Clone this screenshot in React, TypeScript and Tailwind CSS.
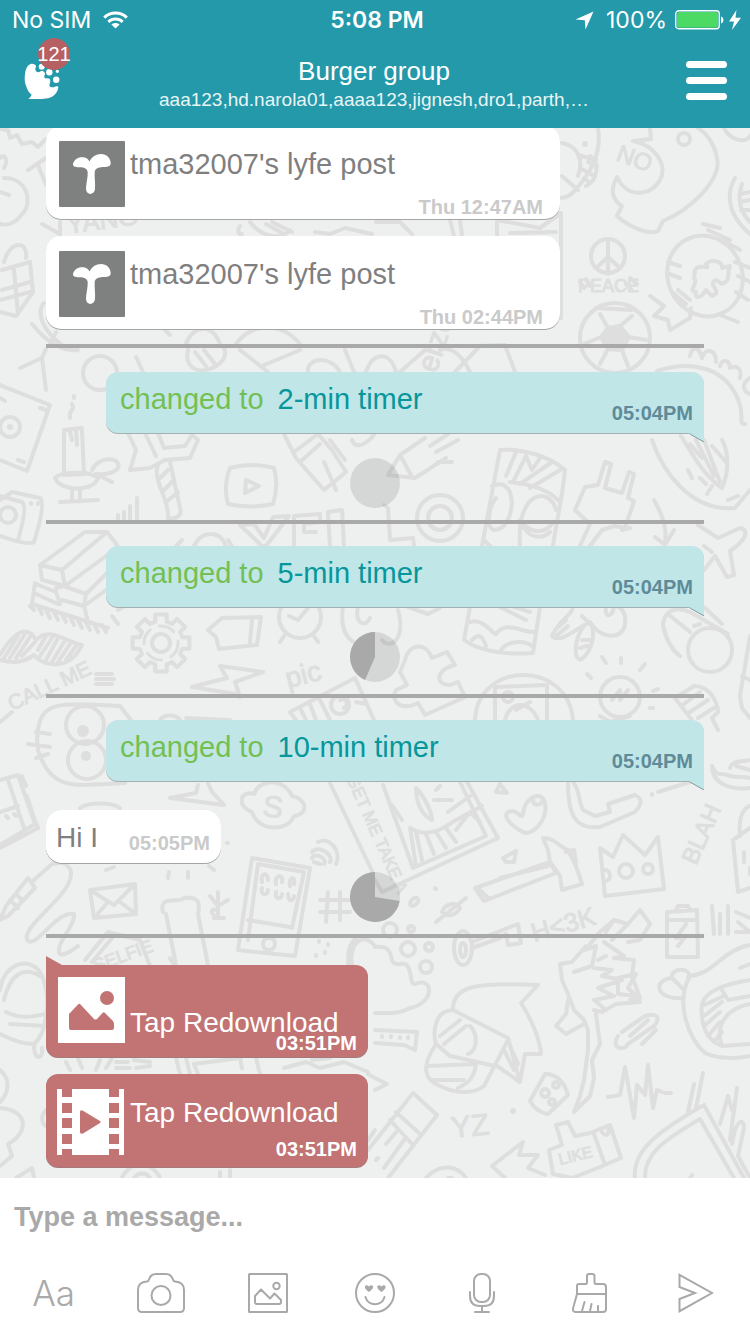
import React from "react";

const OUTLINES: string[] = [
  // top left: comb, pouch, tee, gift
  "M0 129L8 130L10 138L17 135L22 144L32 142L38 147L46 139",
  "M0 158C6 152 8 162 4 168M4 178C30 178 32 206 22 214C14 226 4 225 0 224M0 192L9 195",
  "M28 170L46 158M38 165L46 185M42 224L60 234M60 222V236",
  "M2 270L30 262L33 292L16 316L0 312M4 262C10 240 28 240 26 258M2 290L30 282M14 270L18 314M0 300L30 292",
  "M44 303C36 312 42 330 62 345M32 324C45 340 60 352 78 350M50 344L56 332M165 330L170 335M186 344C192 326 212 322 220 344M236 344C250 324 280 320 300 344",
  "M240 226C236 232 240 236 242 234M250 222C262 238 282 240 290 230M266 224L284 234M272 222L292 232M315 232L330 234L345 228L372 234M376 222L400 222L412 234M450 220L454 236M460 220L462 236M497 220L540 228L561 213V318M497 220V236M510 233L556 232",
  // ball, dragon, eye
  "M598 128C602 152 592 172 575 190C570 197 562 199 558 197M562 143C578 146 584 160 578 176M590 156C600 162 598 180 586 186M578 155L596 160M580 168L594 176M562 176L578 190M588 162L597 166M584 178L590 183",
  "M650 128L651 139L633 141C655 145 668 165 660 180C652 195 628 200 617 177C610 190 612 200 622 206L617 216C630 228 650 235 658 231L663 221C690 210 722 180 717 158C714 142 705 132 698 128",
  "M724 128C730 140 745 144 750 136M735 178C728 190 724 212 750 234M742 184C738 196 738 210 750 222M741 194L750 192M740 202L750 200M741 210L750 210",
  // peace sign
  "M608 239V274M608 257L596 268M608 257L620 268M580 282L584 288M586 279L590 286M626 284L631 289M630 278L637 284",
  // coin head, fish tail, rays
  "M703 224L720 228M708 230L730 240M722 240L740 250M735 262L750 268M738 276L750 282M736 292L748 300M720 315L738 322M668 262L680 266M669 274L680 278",
  "M695 270C700 262 712 272 706 264C712 258 724 262 722 268L730 266C726 276 732 280 722 284L716 280C706 284 724 292 712 296L706 290C700 300 694 298 696 292C686 290 700 284 694 278Z",
  "M650 296L664 306L654 316L668 320L670 330L690 318L691 308M672 292L686 304M678 290L690 300",
  // football
  "M608 328L620 326L629 337L622 350L608 349L601 337ZM608 328L600 314M620 326L632 316M629 337L646 340M622 350L628 366M608 349L600 364M601 337L584 344M596 308L632 310",
  // right speech and cone
  "M690 356C692 344 700 348 702 358C706 346 716 350 716 362M720 366C722 358 730 360 730 368C738 364 742 370 740 378M750 378C740 384 744 392 750 394",
  "M657 371C690 360 728 366 740 405C744 420 738 424 745 424M652 440C662 470 690 512 735 508L750 490M681 436C694 456 702 474 722 488C730 470 728 450 722 440M690 444L702 458M696 440L714 476M704 440L720 482M712 446L726 462M688 470L692 478M700 478L706 484M707 494L712 486M728 500L738 496",
  // left column middle
  "M20 368L42 358L46 390M42 358L46 349M136 357L143 372",
  "M188 350C184 366 196 372 206 370C222 366 228 356 224 348M195 352L206 366M204 350L215 364",
  "M240 350L268 372M262 366L300 350M308 372C306 358 330 354 340 372M345 350L354 372M366 372C372 352 390 350 396 372M400 372L425 350M440 350C452 346 462 356 470 372M455 372L480 346L505 345L515 372",
  "M0 385L50 405L27 471L0 460M40 408L46 410M18 460L24 462M0 398L5 401",
  "M64 430V475M82 430L84 474M64 430L82 428M70 432L72 440M76 430L77 445M70 418C68 408 76 412 72 404M74 396V398M64 475L84 474M55 478C60 492 94 492 98 478C90 470 60 472 55 478M92 470C100 454 122 458 118 468C112 476 96 474 96 474L112 482M72 488V500M80 488V500M60 502L98 500",
  "M128 433L136 450L130 470L150 468L165 460L190 458L198 440L190 433M145 433L156 456M158 433L164 448L185 446L190 438M158 465C152 480 170 500 168 518C178 520 182 514 180 508L170 462M160 478L168 470M164 490L174 480M166 502L178 492",
  "M230 468Q252 462 274 468Q279 486 273 504Q250 509 228 504Q223 486 230 468ZM246 480L259 486L245 493Z",
  "M284 434L296 458L324 490L346 472L332 450L318 434M294 452L318 434M300 462L320 444M324 462L336 490M330 440L345 460",
  "M352 440C356 452 372 440 374 434M388 475L400 455L425 438M388 475L415 478L446 458M400 455L412 477M430 446L448 434M436 452L458 440M438 462L452 462",
  "M0 500L12 492L40 498Q46 504 34 542Q28 546 0 536M0 496L22 502Q28 506 18 540M31 503V504M38 503V504",
  "M118 515V520M124 512V520M130 506V520M137 498V520",
  // brick pile
  "M40 565L85 532L107 532L117 545M40 565L62 570L107 532M40 565L42 580L65 586L106 556M62 570L65 586M35 583L32 604L108 628M36 584L56 592L60 604M36 594L58 604M56 588L64 586L86 594L106 574M62 600L84 606L86 594M84 606L106 590M84 606L88 622M30 606L34 610M38 606L42 614M46 610L50 618M54 612L58 620M62 614L66 622M70 617L74 625M78 620L82 628M86 622L90 630M94 624L98 632M102 625L106 632M112 616L118 624M118 610L128 604",
  // vello letters
  "M240 525L262 546L266 546L289 516L273 517L264 538L254 524ZM294 516L320 514V522L304 524V532H316M294 516V546M328 512L342 510L344 546M328 512L330 546M384 505L388 508L390 540L413 538L414 546",
  "M176 546L182 540M194 546C202 530 220 530 226 546M228 540L232 546",
  // patterned jug
  "M500 450C520 448 550 456 565 470C562 500 556 524 553 546M500 450L482 546M506 476L516 452M514 480L526 456L532 470L540 458M520 484L552 462M530 488L560 470M492 486C520 474 516 530 494 530C486 528 488 508 496 498M510 482C530 484 548 490 558 500M520 546C516 490 550 486 556 510M520 520C530 534 544 534 552 524M524 528C532 540 544 538 550 532M484 540L490 546",
  // plug, arrow, plane
  "M575 510L585 487L598 485L605 462L611 464L605 488L622 493L629 472L634 474L628 498L634 501L625 528L615 526L602 530L590 546M575 510L590 524L580 546M622 530L630 528M654 500C664 518 667 530 665 543M655 537L665 545L674 530",
  "M698 525L718 538L740 528C750 530 746 540 730 551L734 575L727 577L715 556L704 570M704 546L712 552",
  // row at 610-660
  "M208 630L222 618L261 617L257 645L219 649L216 637ZM252 619L250 642",
  "M289 616L298 620L308 608M284 636L280 642M314 636L318 642",
  "M0 655C15 630 27 625 36 640C50 626 66 642 82 645C70 670 45 668 34 655C20 665 8 662 0 660M4 658L18 636M10 658L25 634M16 658L32 634M22 656L35 642M38 650L46 636M40 656L52 638M46 660L58 638M52 662L64 642M58 662L70 644M66 660L76 646",
  "M343 607C338 640 360 650 366 640M358 607C354 624 366 628 370 618M398 610C406 640 390 650 382 640M408 607L428 614L440 608",
  "M470 607L464 640C480 652 510 655 533 653L540 607M470 622C484 618 492 634 496 634C506 620 520 632 534 632M472 640C482 630 484 642 486 646M500 652C506 640 524 640 532 646M500 607L526 620M514 607L530 612",
  "M573 607C572 616 560 618 552 636C560 644 574 630 590 622C600 638 618 640 624 628C628 616 622 608 618 607M582 616L592 626C596 640 588 656 580 660C572 656 576 636 584 626M555 630L566 620M556 636L568 626M582 640L590 640M580 648L587 646M606 607C604 618 612 618 614 607",
  "M663 625C664 610 676 606 690 612L728 634M668 614L690 632M704 607L722 624M663 625C666 640 672 650 680 656M694 626L700 624",
  "M750 636L740 696L742 708L750 718M742 676L750 680",
  // lightning, owl, wallet
  "M220 666L263 672L235 682L240 697M220 666L227 678L192 687L236 694",
  "M96 674L112 674M96 679L114 679M96 684L112 684M0 722L12 712",
  "M38 730C42 700 62 703 120 706L134 724M38 750C46 776 60 786 85 785L125 783M36 732L50 734M28 744L50 747M36 758L48 754M38 730C36 740 38 744 38 750",
  "M160 720C164 714 176 714 180 720M186 718L230 720M198 785L196 793L170 798L224 805L212 792L208 783M80 808C88 802 112 802 120 808",
  "M290 712L355 678L374 720M290 712L296 720M300 708L306 720M310 704L316 720M320 700L330 720M340 700C346 696 350 706 344 708M356 702L366 704",
  "M405 660C408 645 425 640 432 658L447 652L455 665C435 670 435 685 450 685L458 682L465 697L425 715L418 703C400 712 390 700 396 690L407 685L400 672Z",
  "M475 720C478 660 568 660 573 720M495 687L547 685V720M495 687V720M505 720C510 700 530 700 538 720M516 710L530 702",
  "M602 657L606 663M621 658V663M645 664L640 670M587 674L591 678M653 691L658 689M650 708H653M612 700L620 690L620 700L628 690M600 716L610 722L630 716",
  "M675 698L694 686C712 686 718 706 718 712L712 718L718 730M675 698L692 720M684 704L700 692M690 712L708 700M698 718L714 708",
  // newspaper, cloud, poster
  "M0 780L18 775L35 824L0 845M8 780L24 828M0 812L18 806M6 816L8 818M14 814L16 816M22 776L26 786M27 796L34 818L38 828L0 848",
  "M254 794C240 790 236 806 252 812C258 832 288 832 294 816C310 814 306 798 292 796C284 778 260 778 254 794Z",
  "M330 783L373 873M382 892L498 838L466 780M383 785L413 868L486 836L460 782M410 828L416 866M410 828C430 840 446 826 456 820L482 806M416 832L422 860M426 834L434 854M436 832L446 848M446 828L456 842M416 788C424 796 432 812 432 820C420 814 416 800 416 788ZM434 800L452 800M436 790L440 786M448 812L470 796M456 830L470 812L480 822M392 805L402 820M382 892L375 880",
  "M496 792L500 784L507 793ZM525 833C508 825 500 812 512 811C518 811 522 820 523 814C525 796 540 792 544 800C550 815 536 834 525 833ZM533 798C532 806 540 806 542 802",
  "M568 782C568 815 575 830 600 827L635 812Q646 800 635 795L608 804L610 812L595 816L583 810C578 800 580 790 573 782M658 792L690 782M652 794V795",
  "M600 848L613 857L623 835L645 855L658 837L664 889L605 896ZM603 870C612 868 612 882 605 881",
  "M475 888L550 862L556 873L484 901ZM480 890L488 898M500 878L548 866M543 838C556 838 560 848 568 850L576 866L582 884L562 890L560 876L550 862L548 850ZM566 852L574 850L576 862M503 858L516 851L514 862L506 862Z",
  "M435 888L436 889M410 904C412 896 420 896 418 902C414 908 410 906 410 904M436 922L466 898M442 912C446 902 458 902 460 908C454 918 446 916 442 912",
  "M472 942L518 924L521 943L508 945L506 934L500 938M472 948L500 938",
  "M667 912L697 910L698 957L667 957ZM667 920H697M676 910L678 906H688L690 910M686 924L676 938L686 936L678 946M712 906L714 934M728 906V934M720 914V934M736 912L750 918M738 922L750 932M736 932H750",
  "M712 766C712 786 735 790 750 788M712 766C716 778 724 772 730 776C738 778 742 776 750 778M730 768C732 760 742 762 750 760M736 766L750 770M733 840L750 828M733 840L738 892L750 888M740 836C738 816 744 808 750 806M744 852V862M750 868V874",
  "M106 870L114 867M169 872L168 878M188 872V878M209 866L214 870M227 843H228",
  "M0 920L6 906L28 878L35 888L8 916L0 920M10 900L18 908M16 894L22 900M34 880L52 864C70 860 80 872 60 896C42 916 24 930 27 940C36 950 56 910 74 914C76 926 54 944 60 954C66 956 72 950 78 946",
  "M90 890L135 884L136 914L94 918ZM90 890L114 905L135 884M94 918L108 902M136 914L120 902",
  "M163 912C158 894 180 904 184 898C200 896 200 904 198 914L208 965M166 914L176 965M218 892V915M210 896L218 906L228 900M214 915C210 912 212 908 216 910M214 918H224",
  "M252 858L310 868L295 956L238 950ZM258 864L304 872L292 928M258 864L248 940M248 920L290 927M262 882C260 872 268 872 268 880M276 884C274 874 284 874 282 882M290 886C288 876 296 876 294 884M262 888C260 896 268 896 268 890M276 892C274 900 282 900 282 894M288 894C288 902 294 902 294 896",
  "M312 858C314 852 328 858 324 864M312 852C320 844 334 856 330 862M318 842C330 836 342 852 336 864M314 862L320 864M328 892L326 922M340 892V920M320 900H350M320 912H350",
  // blob with dots, mask
  "M352 965C348 945 362 930 375 946M375 947C400 945 384 966 400 964C414 960 408 985 415 984C435 976 434 1004 410 1008C400 1014 390 1013 375 1013",
  "M453 1010C452 985 480 982 538 985L521 1003C532 1020 540 1040 541 1054L525 1054L520 1082L497 1066M453 1010L508 1038L520 1082M453 1010C436 1010 432 1030 436 1044L450 1056M436 1044C420 1068 425 1080 440 1086C456 1094 474 1094 484 1086L508 1040M450 1056L495 1066M428 1066L476 1064C474 1080 466 1084 458 1088M432 1080L464 1080M470 1026C478 1034 478 1050 468 1054M440 1036L460 1020M444 1044L466 1026M504 1050L514 1070M510 1046L518 1064",
  "M375 1030L417 1032L415 1050L404 1045L375 1043M382 1036V1037M391 1036V1037M400 1037V1038M408 1037V1038M375 1078L387 1084L375 1090",
  // tangled map
  "M600 932L614 920L628 924L640 910L650 924L640 940L628 942M614 920L606 932M628 924L612 940M600 932L590 944M586 946L572 962L560 964L562 980L568 994L574 1010L584 1020L588 1030L588 1050L584 1080L580 1096L574 1112M584 950L596 946L592 966L574 972M604 942L624 956L614 958L634 960L632 976L640 998L630 1000M594 968L612 970L602 976L622 980L598 988L614 996L594 1000L606 1010M618 978L636 974L628 988L636 996L618 994ZM594 1010L602 1012L616 1004L640 1002M568 1000L566 1014L556 1026L566 1034L584 1024M596 1014L600 1044L592 1060L594 1078L590 1096L576 1110M606 956L598 960",
  "M618 1036C610 1048 624 1052 628 1044L654 1026C664 1014 650 1012 642 1018L622 1032M630 1036L648 1020M642 1044L656 1030",
  "M750 945C722 950 714 974 690 976C674 1004 690 1040 705 1053C720 1060 740 1058 750 1056M750 980C726 984 706 990 702 1004C700 1024 706 1040 722 1046L750 1044M722 990L728 1000L750 996M722 1046C714 1024 728 1008 750 1004M702 1006L724 996M704 1016L722 1002M704 1026L720 1012M708 1036L720 1022M714 1042L722 1032M688 978C694 968 670 966 672 978C652 980 656 1000 682 998M672 978L682 988M740 968L750 964",
  "M608 1097L620 1095L625 1067L634 1118L637 1085L645 1095L648 1065L653 1108L657 1090L662 1092M665 1093H671",
  "M545 1074Q562 1074 568 1095L548 1114Q536 1112 530 1101Z",
  "M549 1150L562 1145L556 1125L568 1122L575 1136L590 1133L610 1125L621 1158L600 1167L572 1178L553 1174ZM594 1134L604 1162M602 1132C606 1138 610 1134 608 1128",
  "M368 1150L413 1093L437 1115L388 1178M390 1120L412 1144M396 1112L420 1134M386 1144L398 1130M384 1168L404 1140M376 1160L378 1158",
  "M505 1178L492 1166L523 1142L519 1155L538 1155L528 1168L545 1175M426 1178C440 1162 458 1166 466 1178M448 1178H452",
  "M635 1178C632 1150 660 1130 704 1105L744 1178M645 1178C644 1154 664 1140 700 1119L734 1178M688 1112L694 1084M696 1108L703 1073M720 1124L728 1096L732 1110M730 1140L737 1088M732 1144C736 1118 744 1118 744 1128L738 1156L750 1178M690 1178L692 1175",
  // bottom left
  "M0 990C4 960 34 956 42 976C52 1000 46 1034 34 1044C22 1044 8 1038 0 1034M4 1000C10 974 24 966 40 976M6 1012C22 1020 34 1016 46 1014M10 1024L46 1026M34 1046C34 1062 44 1058 42 1048M0 1070C12 1080 8 1094 0 1102M0 1108C30 1110 28 1134 8 1144L12 1156L0 1166M16 1178L32 1168L34 1178",
  "M85 960L108 932L140 940L150 966M92 962L112 938M174 965L170 958M66 1062L70 1070M78 1058L82 1068M96 1070L100 1060M106 1068L112 1058M116 1062H128M116 1068H130M134 1060L150 1062M136 1068L150 1066M176 1058L180 1074M186 1058L190 1074M198 1074L194 1064L240 1058L242 1068M256 1058L260 1074M284 1068L306 1062L320 1068L344 1062L368 1072M312 1060L330 1058",
  "M122 1178C130 1160 152 1160 160 1178M134 1178C138 1172 146 1172 150 1178M220 1172V1178M230 1170V1178M46 1110C40 1116 42 1124 46 1126M368 1074L375 1078M368 1140L375 1130",
  "M319 941V942M325 952V953M316 955V956M328 944V945M356 938C344 950 350 962 348 970",
];

const CIRCLES: number[][] = [
  [684, 139, 6], [608, 256, 17], [615, 338, 35], [100, 373, 17], [10, 427, 10], [8, 515, 8],
  [440, 518, 23], [440, 518, 12], [161, 643, 9], [300, 617, 21], [85, 725, 19], [87, 760, 19],
  [620, 697, 20], [710, 650, 22], [508, 697, 5], [626, 871, 7], [648, 869, 5], [269, 944, 6],
  [390, 930, 7], [408, 949, 7], [429, 947, 4], [426, 967, 6], [411, 929, 3], [545, 1093, 4],
  [556, 1085, 3], [552, 1102, 3], [340, 705, 9],
];

const WORDS: { t: string; x: number; y: number; r: number; s: number }[] = [
  { t: "NO", x: 615, y: 160, r: 20, s: 24 },
  { t: "YANG", x: 68, y: 234, r: -8, s: 26 },
  { t: "PEACE", x: 578, y: 292, r: 0, s: 18 },
  { t: "erzo", x: 436, y: 374, r: -72, s: 30 },
  { t: "CALL ME", x: 12, y: 711, r: -25, s: 21 },
  { t: "pic", x: 288, y: 688, r: -14, s: 28 },
  { t: "S", x: 262, y: 816, r: 6, s: 30 },
  { t: "GET ME TAKE A", x: 346, y: 778, r: 66, s: 17 },
  { t: "BLAH", x: 696, y: 866, r: -66, s: 24 },
  { t: "H<3K", x: 534, y: 942, r: -16, s: 26 },
  { t: "YZ", x: 452, y: 1138, r: -6, s: 30 },
  { t: "LIKE", x: 560, y: 1165, r: -14, s: 16 },
  { t: "SELFIE", x: 96, y: 972, r: -20, s: 18 },
];

function gearPath(cx: number, cy: number) {
  const pts: string[] = [];
  for (let i = 0; i < 8; i++) {
    const a = (i * Math.PI) / 4;
    for (const [d, r] of [[-0.26, 22], [-0.2, 29], [0.2, 29], [0.26, 22]]) {
      pts.push(`${(cx + r * Math.cos(a + d)).toFixed(1)} ${(cy + r * Math.sin(a + d)).toFixed(1)}`);
    }
  }
  return `M${pts.join("L")}Z`;
}

function Wallpaper() {
  return (
    <svg
      aria-hidden="true"
      className="absolute inset-0 h-full w-full"
      viewBox="0 128 750 1050"
      preserveAspectRatio="xMidYMin slice"
      fill="none"
      stroke="#dddedd"
      strokeWidth="4"
      strokeLinecap="round"
      strokeLinejoin="round"
    >
      {OUTLINES.map((d, i) => (
        <path key={i} d={d} />
      ))}
      {CIRCLES.map(([x, y, r], i) => (
        <circle key={i} cx={x} cy={y} r={r} />
      ))}
      <path d={gearPath(161, 643)} />
      <circle cx="161" cy="643" r="17" strokeDasharray="16 10" strokeWidth="3" />
      <ellipse cx="705" cy="276" rx="37" ry="41" transform="rotate(-25 705 276)" />
      <ellipse cx="463" cy="948" rx="9" ry="17" />
      <ellipse cx="463" cy="950" rx="3" ry="7" />
      <g fill="#dddedd" stroke="none">
        <path d="M608 328L620 326L629 337L622 350L608 349L601 337Z" />
        <circle cx="83" cy="731" r="6" />
        <circle cx="86" cy="756" r="5" />
        <circle cx="585" cy="144" r="3" />
        <circle cx="10" cy="427" r="3" />
        <circle cx="513" cy="1111" r="3" />
      </g>
      <g fill="#dddedd" strokeWidth="1" fontFamily="Liberation Sans, sans-serif">
        {WORDS.map((w) => (
          <text key={w.t} x={w.x} y={w.y} fontSize={w.s} transform={`rotate(${w.r} ${w.x} ${w.y})`}>
            {w.t}
          </text>
        ))}
      </g>
    </svg>
  );
}

function StatusBar() {
  return (
    <div className="grid h-10 grid-cols-3 items-center pr-2 pl-3 font-['Inter',sans-serif] text-[23px] leading-10">
      <div className="flex items-center gap-3">
        <span>No SIM</span>
        <svg width="25" height="18" viewBox="0 0 25 18" fill="none" stroke="#fff" strokeWidth="3">
          <path d="M1.2 6.6C7.5 .6 17.500 .6 23.800 6.600" />
          <path d="M5.300 10.800C9.500 7 15.500 7 19.700 10.800" />
          <path d="M12.500 17.500L8.400 13.400C10.800 11.400 14.200 11.400 16.600 13.400Z" fill="#fff" stroke="none" />
        </svg>
      </div>
      <div className="text-center font-semibold">5:08 PM</div>
      <div className="flex items-center justify-end">
        <svg className="mr-3" width="19" height="19" viewBox="0 0 19 19" fill="#fff">
          <path d="M18.500 .5L10.500 18.500L9.800 9.200L.5 8.500Z" />
        </svg>
        <span>100%</span>
        <svg className="ml-2" width="49" height="20" viewBox="0 0 49 20">
          <rect x=".75" y=".75" width="43.500" height="18" rx="3" fill="none" stroke="#fff" strokeWidth="1.300" />
          <rect x="2" y="2" width="41" height="15.500" rx="2" fill="#4cd964" />
          <path d="M46 6.500C49.200 7 49.200 13 46 13.500Z" fill="#fff" />
        </svg>
        <svg className="ml-1" width="14" height="20" viewBox="0 0 14 20" fill="#fff">
          <path d="M8.500 0L1 11.500H6L4 20L13 7.800H7.500Z" />
        </svg>
      </div>
    </div>
  );
}

function Header() {
  return (
    <header className="relative z-10 bg-[#2499a9] text-white">
      <StatusBar />
      <div className="flex h-[88px] items-start justify-between pr-[23px] pl-6">
        <button type="button" aria-label="Back" className="relative mt-[23px] w-[38px]">
          <svg className="block" width="38" height="38" viewBox="0 0 38 38" fill="#fff">
            <path d="M6.700 1C9 .5 12 1.500 12 3.500C12 4.500 11 5.500 11.300 6.500C12 9 13.500 9.500 15.300 9C16.500 8 18.300 7.600 19.500 8.500C21 9.500 21.300 10.500 20.700 12C20 13.500 20 15 22 15.500C24 15 26.500 15.500 26.300 18C26.200 20 25 21.500 25.600 23C26.300 24.500 28 24.500 29.500 24.200C31.500 23.500 34 22.500 34.300 24C34.300 28 31 32.500 27 34.300C24 35.600 21 36 17.700 36H4.300C6 34.500 7.500 33 7.500 31.500C5 29.500 3.300 27 2.500 24C.5 20 .2 14 1.300 9C2 5 4 1.800 6.700 1Z" />
            <circle cx="17.700" cy="3.700" r="3" />
            <circle cx="25.300" cy="9.300" r="3.200" />
            <circle cx="33.400" cy="8.300" r="1.600" />
            <circle cx="32.200" cy="16.800" r="3.200" />
          </svg>
          <span className="absolute -top-[25px] left-[14px] flex h-8 w-8 items-center justify-center rounded-full bg-[#b66063] text-[20px] leading-8">
            121
          </span>
        </button>
        <div className="min-w-0 flex-1 pt-4 text-center">
          <h1 className="truncate text-[26px] leading-[30px]">Burger group</h1>
          <p className="truncate text-[19px] leading-7 text-[#e8f5f7]">
            aaa123,hd.narola01,aaaa123,jignesh,dro1,parth,…
          </p>
        </div>
        <button type="button" aria-label="Menu" className="mt-[21px] flex w-[41px] flex-col gap-[9px]">
          <span className="h-[7px] rounded-full bg-white" />
          <span className="h-[7px] rounded-full bg-white" />
          <span className="h-[7px] rounded-full bg-white" />
        </button>
      </div>
    </header>
  );
}

function PostBubble({ time }: { time: string }) {
  return (
    <article className="flex h-[93px] w-[514px] max-w-full rounded-[15px] bg-white pt-[15px] pl-[13px] shadow-[0_1px_0_#a5a5a5]">
      <svg className="shrink-0" width="66" height="66" viewBox="0 0 66 66">
        <rect width="66" height="66" rx="1" fill="#7f8180" />
        <path
          d="M14 23C15 18 20 15.500 24.500 16.300C27.500 16.800 29.500 18.500 30.500 20.500C32.500 16 37 13 42 13C47.500 13 52 17 51.700 23C50.500 26.500 46 25.800 42 26.200C38 26.700 36 28 35.700 31C35.300 37 36.500 42 36 48C35 54.500 27.500 54.500 27 48C27 42 29 37 28.700 31C28.400 28 26 26.500 22.500 26.200C19 26 14 27 14 23Z"
          fill="#fff"
        />
      </svg>
      <p className="ml-[5px] flex-1 self-start pt-2 text-[29px] leading-[30px] whitespace-nowrap text-[#7f7f7f]">
        tma32007's lyfe post
      </p>
      <time className="-ml-10 self-end pr-[17px] text-[20px] leading-6 font-bold whitespace-nowrap text-[#cacaca]">
        {time}
      </time>
    </article>
  );
}

function TimerBubble({ value, time }: { value: string; time: string }) {
  return (
    <article className="relative ml-[60px] flex h-[61px] justify-between rounded-xl rounded-br-none bg-[#c0e6e8] pr-[11px] pl-[14px] shadow-[0_1px_0_#a3b1b2]">
      <p className="flex gap-[14px] pt-3 text-[29px] leading-[30px]">
        <span className="text-[#74bf52]">changed to</span>
        <span className="text-[#06969c]">{value}</span>
      </p>
      <time className="self-end pb-2 text-[20px] leading-6 font-bold text-[#5f8b98]">{time}</time>
      <svg className="absolute top-full right-0" width="15" height="9" viewBox="0 0 15 9">
        <path d="M0 0H15V9Z" fill="#c0e6e8" />
        <path d="M1 1L15 9" stroke="#7f9a9c" />
      </svg>
    </article>
  );
}

function Pie({ dark }: { dark?: string }) {
  return (
    <svg className="mx-auto block" width="50" height="50" viewBox="-25 -25 50 50">
      <circle r="25" fill="#000" fillOpacity="0.1" />
      {dark && <path d={dark} fill="#a9a9a9" />}
    </svg>
  );
}

function Divider({ className }: { className: string }) {
  return <hr className={`h-1 border-0 bg-[#a9a9a9] ${className}`} />;
}

function PictureTile() {
  return (
    <svg className="ml-3 shrink-0" width="67" height="66" viewBox="0 0 67 66">
      <rect width="67" height="66" fill="#fff" />
      <path
        d="M11 51V37L20.500 27Q21.500 26.500 22.500 27.500L36 42Q37.500 43 39 42L45 35.500Q46 35 47 36L54.500 43.500Q56 45 56 47V51Q56 53 54 53H13Q11 53 11 51Z"
        fill="#c27373"
      />
      <circle cx="49" cy="21" r="7" fill="#c27373" />
    </svg>
  );
}

function FilmTile() {
  return (
    <svg className="ml-[11px] shrink-0" width="67" height="66" viewBox="0 0 67 66">
      <rect width="67" height="66" fill="#fff" />
      <g fill="#c27373">
        <path d="M5 0H15V8H5ZM5 14H15V24H5ZM5 29H15V39H5ZM5 45H15V55H5ZM5 60H15V66H5Z" />
        <path d="M52 0H62V8H52ZM52 14H62V24H52ZM52 29H62V39H52ZM52 45H62V55H52ZM52 60H62V66H52Z" />
        <path d="M23 23Q23 20.500 25.500 21.500L43 32Q44.500 33 43 34L26 44.500Q23 45.500 23 43Z" />
      </g>
    </svg>
  );
}

const redBubble = "relative flex w-[322px] max-w-full rounded-xl bg-[#c27373] text-white shadow-[0_1px_0_#a3797a]";

const ICON = {
  fill: "none",
  stroke: "#a9a9a9",
  strokeWidth: 2,
  strokeLinejoin: "round" as const,
  strokeLinecap: "round" as const,
};

function Composer() {
  const cell = "flex h-12 items-center justify-center";
  return (
    <form className="bg-white pb-[17px]" onSubmit={(e) => e.preventDefault()}>
      <input
        type="text"
        aria-label="Message"
        placeholder="Type a message..."
        className="block h-[78px] w-full px-[14px] text-[27px] font-bold text-[#7f7f7f] outline-none placeholder:text-[#a9a9a9]"
      />
      <div className="grid grid-cols-7 pt-[13px]">
        <button type="button" aria-label="Text style" className={`${cell} font-['Inter',sans-serif] text-[35px] font-light text-[#a9a9a9]`}>
          Aa
        </button>
        <button type="button" aria-label="Camera" className={cell}>
          <svg width="48" height="40" viewBox="0 0 48 40" {...ICON}>
            <path d="M5 39Q1 39 1 35V17Q1 9 10 8.500Q11.500 8.500 12 6.500Q13.500 1 19 1H29Q34 1 36 6.500Q36.500 8.500 38 8.500Q47 9 47 17V35Q47 39 43 39Z" />
            <circle cx="24" cy="22.500" r="9.500" />
          </svg>
        </button>
        <button type="button" aria-label="Gallery" className={cell}>
          <svg width="40" height="40" viewBox="0 0 40 40" {...ICON}>
            <rect x="1" y="1" width="38" height="38" rx=".5" />
            <path d="M7 29V23L13 16.500L22 25.500L26.500 20.500L33 27V29Q33 31 31 31H9Q7 31 7 29Z" />
            <circle cx="28.500" cy="13" r="3.200" />
          </svg>
        </button>
        <button type="button" aria-label="Emoji" className={cell}>
          <svg width="40" height="40" viewBox="0 0 40 40" {...ICON}>
            <circle cx="20" cy="20" r="19" />
            <path d="M10.500 24C13 33.500 27 33.500 29.500 24" />
            <path d="M14 19C9 15.500 9 12.500 11.500 12.200C13 12 14 13.500 14 13.500C14 13.500 15 12 16.500 12.200C19 12.500 19 15.500 14 19ZM26.500 19C21.500 15.500 21.500 12.500 24 12.200C25.500 12 26.500 13.500 26.500 13.500C26.500 13.500 27.500 12 29 12.200C31.500 12.500 31.500 15.500 26.500 19Z" fill="#a9a9a9" stroke="none" />
          </svg>
        </button>
        <button type="button" aria-label="Record voice" className={cell}>
          <svg width="26" height="40" viewBox="0 0 26 40" {...ICON}>
            <rect x="5" y="1" width="16" height="28" rx="7" />
            <path d="M1 19V23Q1 33 11 33H15Q25 33 25 23V19M13 33V38M6 39H20" />
          </svg>
        </button>
        <button type="button" aria-label="Clear chat" className={cell}>
          <svg width="35" height="40" viewBox="0 0 35 40" {...ICON}>
            <path d="M5 21V13Q5 11 7 11H14Q15 11 15 9V3Q15 1 17 1H20Q22.500 1 22.500 3V9Q22.500 11 24 11H31Q34 11 34 14V36Q34 39 31 39H4Q.5 39 1 35.500L5 21H34M12.500 29L10 38M19.500 31L18 38M26 33V38" />
          </svg>
        </button>
        <button type="submit" aria-label="Send" className={cell}>
          <svg width="36" height="40" viewBox="0 0 36 40" {...ICON} strokeLinejoin="miter">
            <path d="M1.500 1.800L34 20L1.500 38.200V26L17 20L1.500 14Z" />
          </svg>
        </button>
      </div>
    </form>
  );
}

export default function App() {
  return (
    <div className="flex min-h-screen flex-col bg-white font-['Liberation_Sans',Arial,sans-serif]">
      <Header />
      <main className="relative flex-1 bg-[#edf0ef]">
        <Wallpaper />
        <div className="relative -mt-0.5 flex flex-col px-[46px] pb-[11px]">
          <PostBubble time="Thu 12:47AM" />
          <div className="mt-[17px]">
            <PostBubble time="Thu 02:44PM" />
          </div>
          <Divider className="mt-[15px] mb-6" />

          <TimerBubble value="2-min timer" time="05:04PM" />
          <div className="mt-[25px]">
            <Pie />
          </div>
          <Divider className="mt-3 mb-[22px]" />

          <TimerBubble value="5-min timer" time="05:04PM" />
          <div className="mt-[25px]">
            <Pie dark="M0 0V-25A25 25 0 0 0 -10 22.900Z" />
          </div>
          <Divider className="mt-3 mb-[22px]" />

          <TimerBubble value="10-min timer" time="05:04PM" />
          <article className="mt-[29px] mb-[9px] flex h-[53px] w-[175px] justify-between rounded-[16px] bg-white pr-[11px] pl-[10px] shadow-[0_1px_0_#a5a5a5]">
            <p className="pt-3 text-[28px] leading-8 text-[#7f7f7f]">Hi I</p>
            <time className="self-end pb-2 text-[20px] leading-6 font-bold text-[#cacaca]">05:05PM</time>
          </article>
          <Pie dark="M0 0L24.700 4A25 25 0 1 1 0 -25Z" />
          <Divider className="mt-3 mb-[27px]" />

          <article className={`${redBubble} h-[92px] rounded-tl-none pt-3`}>
            <svg className="absolute bottom-full left-0" width="16" height="9" viewBox="0 0 16 9">
              <path d="M0 0L16 9H0Z" fill="#c27373" />
            </svg>
            <PictureTile />
            <div className="flex flex-1 flex-col pr-[11px] pl-[5px]">
              <p className="pt-[30px] text-[28px] leading-8 whitespace-nowrap">Tap Redownload</p>
              <time className="-mt-2 text-right text-[20px] leading-6 font-bold">03:51PM</time>
            </div>
          </article>

          <article className={`${redBubble} mt-[17px] h-[93px] pt-[15px]`}>
            <FilmTile />
            <div className="flex flex-1 flex-col pr-[11px] pl-[6px]">
              <p className="pt-2 text-[28px] leading-8 whitespace-nowrap">Tap Redownload</p>
              <time className="mt-2 text-right text-[20px] leading-6 font-bold">03:51PM</time>
            </div>
          </article>
        </div>
      </main>
      <Composer />
    </div>
  );
}
